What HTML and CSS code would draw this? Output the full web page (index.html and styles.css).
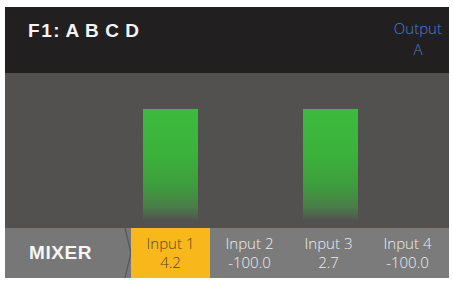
FILE: index.html
```html
<!DOCTYPE html>
<html>
<head>
<meta charset="utf-8">
<link rel="stylesheet" href="styles.css">
</head>
<body>
<div class="screen">
  <header class="header">
    <div class="title">F1: A B C D</div>
    <div class="output">
      <div>Output</div>
      <div>A</div>
    </div>
  </header>
  <main class="meters">
    <div class="spacer"></div>
    <div class="col"><div class="bar"></div></div>
    <div class="col"></div>
    <div class="col"><div class="bar bar-shift"></div></div>
    <div class="col"></div>
  </main>
  <footer class="tabs">
    <div class="mixer">
      <span class="mixer-label">MIXER</span>
      <svg class="chev" width="8" height="50" viewBox="0 0 8 50"><polyline points="1,0 7,25 1,50" fill="none" stroke="#55585e" stroke-width="1.3"/></svg>
    </div>
    <div class="tab active"><span>Input 1</span><span>4.2</span></div>
    <div class="tab"><span>Input 2</span><span>-100.0</span></div>
    <div class="tab"><span>Input 3</span><span>2.7</span></div>
    <div class="tab"><span>Input 4</span><span>-100.0</span></div>
  </footer>
</div>
</body>
</html>
```
FILE: styles.css
```css
html, body {
  margin: 0;
  padding: 0;
  background: #ffffff;
}
body {
  padding: 7px 4px 0 5px;
  font-family: "Open Sans", "Liberation Sans", sans-serif;
}
.screen {
  width: 444px;
  height: 271px;
  display: flex;
  flex-direction: column;
  background: #535050;
}
.header {
  height: 66px;
  background: #221f20;
  display: flex;
  justify-content: space-between;
  align-items: flex-start;
  box-sizing: border-box;
  padding: 0 7px 0 23px;
}
.title {
  margin-top: 13px;
  color: #f4f4f4;
  font-family: "Liberation Sans", Arial, sans-serif;
  font-weight: bold;
  font-size: 19px;
  letter-spacing: 1.6px;
  word-spacing: -2px;
}
.output {
  margin-top: 11px;
  color: #3f84dc;
  font-size: 15px;
  line-height: 21px;
  text-align: center;
  font-weight: 300;
}
.meters {
  height: 155px;
  display: flex;
}
.spacer {
  width: 126px;
}
.col {
  width: 79px;
  display: flex;
  justify-content: center;
  align-items: flex-start;
}
.bar {
  width: 55px;
  margin-top: 36px;
  height: 112px;
  background: linear-gradient(to bottom, #3dbb3d 0%, #3bb23b 40%, #3d9e3d 68%, #4a7e48 87%, #535050 100%);
}
.bar-shift {
  margin-left: 4px;
}
.tabs {
  height: 50px;
  display: flex;
  background: #7b7b7b;
}
.mixer {
  width: 126px;
  display: flex;
  align-items: center;
  justify-content: space-between;
  box-sizing: border-box;
  padding-left: 24px;
  background: #777777;
}
.mixer-label {
  color: #f6f6f6;
  font-family: "Liberation Sans", Arial, sans-serif;
  font-weight: bold;
  font-size: 19px;
  letter-spacing: 0.6px;
}
.chev {
  display: block;
  margin-right: -1px;
}
.tab {
  width: 79px;
  display: flex;
  flex-direction: column;
  align-items: center;
  justify-content: center;
  color: #eeeeee;
  font-size: 15px;
  line-height: 19px;
  font-weight: 300;
}
.tab.active {
  background: #f8b81c;
  color: #5a4820;
}
```
